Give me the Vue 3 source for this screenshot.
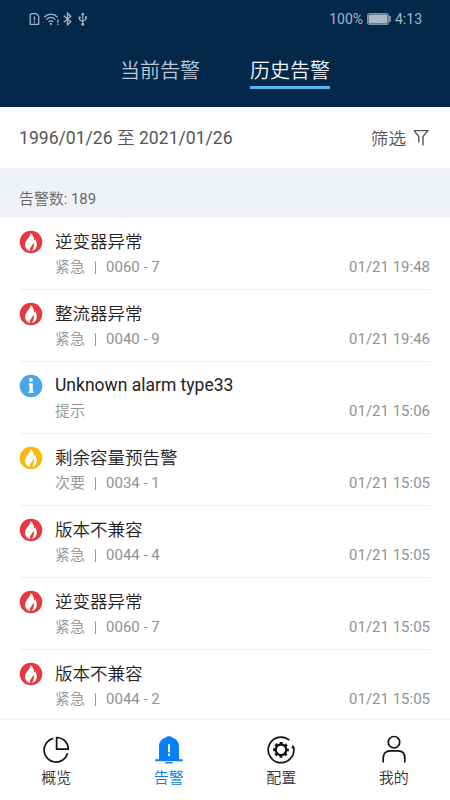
<script setup>
const tabs = [
  { label: '当前告警', active: false },
  { label: '历史告警', active: true },
]
const alarms = [
  { title: '逆变器异常', level: '紧急', code: '0060 - 7', time: '01/21 19:48', kind: 'urgent' },
  { title: '整流器异常', level: '紧急', code: '0040 - 9', time: '01/21 19:46', kind: 'urgent' },
  { title: 'Unknown alarm type33', latin: true, level: '提示', code: '', time: '01/21 15:06', kind: 'info' },
  { title: '剩余容量预告警', level: '次要', code: '0034 - 1', time: '01/21 15:05', kind: 'minor' },
  { title: '版本不兼容', level: '紧急', code: '0044 - 4', time: '01/21 15:05', kind: 'urgent' },
  { title: '逆变器异常', level: '紧急', code: '0060 - 7', time: '01/21 15:05', kind: 'urgent' },
  { title: '版本不兼容', level: '紧急', code: '0044 - 2', time: '01/21 15:05', kind: 'urgent' },
]
const nav = [
  { label: '概览', icon: 'overview' },
  { label: '告警', icon: 'alarm', active: true },
  { label: '配置', icon: 'config' },
  { label: '我的', icon: 'me' },
]
</script>

<template>
  <div class="screen">
    <header class="header">
      <div class="status">
        <div class="status-left">
          <svg class="s-icon" width="60" height="16" viewBox="0 0 60 16" fill="none" stroke="currentColor" stroke-width="1.3">
            <path d="M2.300 2.600h4.800l2.600 2.500v8.200H1.200V3.800z" stroke-linejoin="round" />
            <path d="M5.400 5.500v4M5.400 10.600v1.300" />
            <path d="M15.200 6.200c4-4 9.400-4 13.400 0M17.400 8.600c2.800-2.700 6.200-2.700 9 0M19.600 10.800c1.500-1.300 3-1.300 4.500 0" />
            <circle cx="21.900" cy="12.900" r="1.100" fill="currentColor" stroke="none" />
            <path d="M28.900 8.600v3.200M28.900 12.700v1.300" />
            <path d="M34.800 4.800l7 6-3.300 3V2.200l3.300 3-7 6" />
            <path d="M53.800 3v10M50.600 6.500v2.300l3.200 2M57 6v2.300l-3.200 2" stroke-width="1.100" />
            <path d="M53.800 1.300l1.800 2.700H52z" fill="currentColor" stroke="none" />
            <circle cx="53.800" cy="13.200" r="1.500" fill="currentColor" stroke="none" />
            <circle cx="50.600" cy="6.600" r="1.200" fill="currentColor" stroke="none" />
            <path d="M56 5.300h2v2h-2z" fill="currentColor" stroke="none" />
          </svg>
        </div>
        <div class="status-right">
          <span>100%</span>
          <svg class="battery" width="24" height="12" viewBox="0 0 24 12">
            <rect x=".6" y=".6" width="20.800" height="10.800" rx="2" fill="none" stroke="#7f90a5" stroke-width="1.200" />
            <rect x="1.500" y="1.500" width="19" height="9" rx="1" fill="#aeb9c7" />
            <path d="M23 3v6" stroke="#9daabc" stroke-width="1.500" />
          </svg>
          <span>4:13</span>
        </div>
      </div>
      <nav class="tabs">
        <span v-for="t in tabs" :key="t.label" class="tab cjk" :class="{ active: t.active }">{{ t.label }}</span>
      </nav>
    </header>

    <section class="filter">
      <span class="range">1996/01/26 <span class="cjk">至</span> 2021/01/26</span>
      <span class="filter-btn">
        <span class="cjk">筛选</span>
        <svg class="funnel" width="16" height="18" viewBox="0 0 16 18" fill="none" stroke="#555" stroke-width="1.400">
          <path d="M.9 1.600h14L10 7.600v9M1 1.600l4.800 6v6" />
        </svg>
      </span>
    </section>

    <div class="count"><span class="cjk">告警数</span>: 189</div>

    <ul class="list">
      <li v-for="(a, i) in alarms" :key="i" class="row">
        <svg class="badge" :class="a.kind" width="24" height="24" viewBox="0 0 24 24">
          <circle cx="12" cy="12" r="11.300" fill="currentColor" />
          <template v-if="a.kind === 'info'">
            <circle cx="12" cy="5.900" r="1.900" fill="#fff" />
            <path d="M9.800 9.200h4v8.200h1v1.500H9.400v-1.500h1v-6.600h-.6z" fill="#fff" />
          </template>
          <template v-else>
            <path d="M11.300 3c1 3.600-5.200 6.800-5.200 11.900 0 3.300 2 5.500 5.200 6.100-1-2.800.9-4.300 2-6 .8-1.200 1.200-2.300 1-3.600 1.300 3.300.4 6-1.300 9.500 3.200-.8 5-3.200 4.800-6.500-.2-2.500-1.100-3.800-1.500-5.600-.3 1-.6 1.400-1.200 1.800C15.300 7.700 14.100 4.600 11.300 3z" fill="#fff" />
          </template>
        </svg>
        <div class="body">
          <div class="title" :class="{ cjk: !a.latin }">{{ a.title }}</div>
          <div class="meta">
            <span class="level cjk">{{ a.level }}</span>
            <template v-if="a.code">
              <i class="sep"></i>
              <span>{{ a.code }}</span>
            </template>
            <span class="time">{{ a.time }}</span>
          </div>
        </div>
      </li>
    </ul>

    <footer class="bottom">
      <div v-for="n in nav" :key="n.icon" class="item" :class="{ on: n.active }">
        <svg width="30" height="30" viewBox="0 0 30 30" fill="none" stroke="currentColor" stroke-width="1.700">
          <template v-if="n.icon === 'overview'">
            <path d="M12.300 3.400A12 12 0 1 0 26.600 18.300" />
            <path d="M15.600 2.500v11.700h11.700A11.700 11.700 0 0 0 15.600 2.500z" stroke-linejoin="round" />
          </template>
          <template v-else-if="n.icon === 'alarm'">
            <path d="M11.500 2.700c.6-2 6.400-2 7 0 4.200 1.200 6.500 4.500 6.500 8.800v12.800h3.800v1.900H1.200v-1.900H5V11.500c0-4.300 2.300-7.600 6.500-8.800zM11.300 26.900h7.400v1.500h-7.400z" fill="currentColor" stroke="none" />
            <path d="M15 9.300v7.900M15 18.500v2.400" stroke="#fff" stroke-width="2" />
          </template>
          <template v-else-if="n.icon === 'config'">
            <path d="M23.400 5.200A12.800 12.800 0 1 0 27.700 13" />
            <path d="M25.200 13.300l1.700-3.500 2.200 3.800z" fill="currentColor" stroke="none" />
            <circle cx="15" cy="14.800" r="5.300" stroke-width="2.300" />
            <circle cx="15" cy="14.800" r="6.900" stroke-width="2" stroke-dasharray="2.900 2.519" stroke-dashoffset="1.450" />
          </template>
          <template v-else>
            <circle cx="15" cy="7.200" r="5.700" />
            <path d="M4.200 27.400v-4.300c0-4.500 2.600-7.300 6.900-7.300h7.800c4.300 0 6.900 2.800 6.900 7.300v4.300" />
          </template>
        </svg>
        <span class="label cjk">{{ n.label }}</span>
      </div>
    </footer>
  </div>
</template>

<style>
body {
  margin: 0;
  background: #fff;
}
</style>

<style scoped>
.screen {
  width: 450px;
  height: 800px;
  display: flex;
  flex-direction: column;
  overflow: hidden;
  background: #fff;
  font-family: Roboto, 'Noto Sans CJK SC', sans-serif;
  font-weight: 400;
}
.cjk {
  font-family: 'Noto Sans CJK SC', sans-serif;
  font-weight: 350;
}
.header {
  height: 107px;
  flex: none;
  background: #042849;
}
.status {
  height: 38px;
  display: flex;
  align-items: center;
  justify-content: space-between;
  padding: 0 28px 0 29px;
  color: #a8b5c6;
  font-size: 14px;
}
.s-icon,
.battery {
  display: block;
}
.status-right {
  display: flex;
  align-items: center;
  gap: 4px;
}
.tabs {
  display: flex;
  justify-content: center;
  gap: 50px;
  padding-top: 17px;
}
.tab {
  height: 31px;
  line-height: 30px;
  font-size: 20px;
  color: #bdc9d7;
  border-bottom: 3px solid transparent;
}
.tab.active {
  color: #f4f8fc;
  border-bottom-color: #55b5f2;
}
.filter {
  height: 61px;
  flex: none;
  box-sizing: border-box;
  padding: 0 21px 0 19px;
  display: flex;
  align-items: center;
  justify-content: space-between;
  font-size: 17.600px;
  color: #555;
}
.range {
  line-height: 26px;
}
.filter-btn {
  display: flex;
  align-items: center;
  gap: 7px;
}
.count {
  height: 50px;
  flex: none;
  box-sizing: border-box;
  padding: 11px 19px 0;
  background: #eff3f7;
  font-size: 14.900px;
  line-height: 38px;
  color: #666;
}
.list {
  flex: 1;
  min-height: 0;
  overflow: hidden;
  list-style: none;
  margin: 0;
  padding: 0 20px;
}
.row {
  height: 72px;
  box-sizing: border-box;
  border-bottom: 1px solid #ececec;
  display: flex;
  gap: 12px;
  padding-top: 11px;
}
.badge {
  flex: none;
  margin: 1px 0 0 -1px;
}
.urgent {
  color: #e33b3d;
}
.info {
  color: #47a6e8;
}
.minor {
  color: #f9b80c;
}
.body {
  flex: 1;
}
.title {
  height: 24px;
  line-height: 24px;
  font-size: 17.500px;
  color: #222;
}
.title.cjk {
  line-height: 23px;
}
.meta {
  display: flex;
  align-items: center;
  height: 28px;
  font-size: 15px;
  color: #929292;
}
.level {
  line-height: 20px;
  padding-bottom: 2px;
}
.sep {
  width: 1px;
  height: 13px;
  margin: 0 10px;
  background: #999;
}
.time {
  margin-left: auto;
}
.bottom {
  height: 82px;
  flex: none;
  box-sizing: border-box;
  border-top: 2px solid #f3f3f3;
  display: flex;
  background: #fff;
}
.item {
  flex: 1;
  display: flex;
  flex-direction: column;
  align-items: center;
  padding-top: 15px;
  color: #111;
}
.label {
  margin-top: 1px;
  font-size: 15px;
  line-height: 22px;
  color: #333;
}
.item.on,
.item.on .label {
  color: #087ff5;
}
</style>
